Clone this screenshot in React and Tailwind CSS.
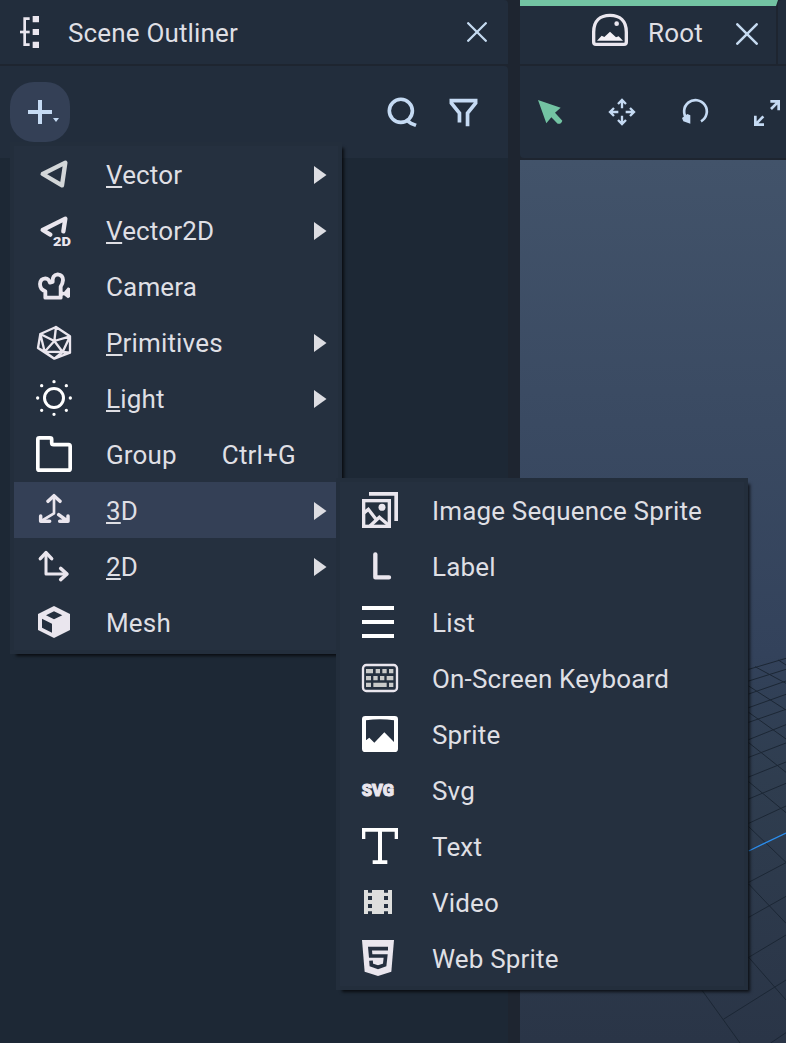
import React from "react";

function Icon({ children, color = "text-[#eae6ee]" }) {
  return (
    <svg viewBox="0 0 120 120" className={"h-10 w-10 shrink-0 " + color} fill="none" stroke="currentColor" strokeLinecap="round" strokeLinejoin="round">
      {children}
    </svg>
  );
}

const solid = { fill: "currentColor", stroke: "none" };

const icons = {
  vector: (
    <Icon color="text-[#d3d6d8]"><path strokeWidth="13" d="M26 60 94 26 84 94Z" /></Icon>
  ),
  vector2d: (
    <Icon>
      <path strokeWidth="13" d="M49 74 26 60 94 26 88 64" />
      <text {...solid} x="57" y="108" fontSize="39" fontWeight="900" textLength="54" lengthAdjust="spacingAndGlyphs" className="font-['Roboto',sans-serif]">2D</text>
    </Icon>
  ),
  camera: (
    <Icon>
      <path strokeWidth="11.5" d="M34 95V76Q18 70 18 54Q19 38 34 37Q45 38 48 50L56 48Q54 27 71 25Q87 27 87 42Q86 54 80 62V95Z" />
      <path {...solid} d="M82 76 90 78 102 64 108 67V93L102 97 90 88 82 90Z" />
    </Icon>
  ),
  primitives: (
    <Icon>
      <path strokeWidth="7" d="M66 15 108 43 108 92 61 110 12 78 19 36Z M61 57 66 15 M61 57 108 43 M61 57 86 90 M61 57 32 89 M61 57 19 36 M108 43 86 90 32 89 19 36 M86 90 108 92 M86 90 61 110 32 89 12 78" />
    </Icon>
  ),
  light: (
    <Icon color="text-white">
      <circle cx="60" cy="60" r="28.5" strokeWidth="9" />
      <path strokeWidth="10" d="M60 11h.01M60 109h.01M11 60h.01M109 60h.01M23 23h.01M97 23h.01M23 97h.01M97 97h.01" />
    </Icon>
  ),
  group: (
    <Icon color="text-white">
      <path strokeWidth="11" d="M16 11.5H48Q53 11.5 53 16V26Q53 32 59 32H104Q108.500 32 108.500 37V104Q108.500 108.500 104 108.500H16Q11.500 108.500 11.500 104V16Q11.500 11.500 16 11.500Z" />
    </Icon>
  ),
  threeD: (
    <Icon>
      <path strokeWidth="8" d="M60 20V70L22 93" />
      <path strokeWidth="10.5" d="M42 34 60 17 78 34 M20 78V94H47 M74 74 100 93 M102 78V94H77" />
    </Icon>
  ),
  twoD: (
    <Icon>
      <path strokeWidth="9" d="M36 20V84H98" />
      <path strokeWidth="10.5" d="M19 38 36 20 53 38 M80 67 99 84 80 101" />
    </Icon>
  ),
  mesh: (
    <Icon>
      <path {...solid} fillRule="evenodd" d="M60 12 108 36V84L60 108 12 84V36Z M36 40 60 52 85 40 60 28Z M24 50V77L54 92V65Z" />
    </Icon>
  ),
  sequence: (
    <Icon>
      <g strokeLinecap="butt" strokeLinejoin="miter">
        <path strokeWidth="11" d="M27 11.5H108.500V93" />
        <rect x="11" y="32" width="77" height="77" strokeWidth="10" />
        <path strokeWidth="10" d="M10 70 25 58 52 93 M30 108 58 82 88 107" />
      </g>
      <circle {...solid} cx="66" cy="52" r="10.5" />
    </Icon>
  ),
  label: <Icon><path strokeWidth="13" d="M46 25V94H87" /></Icon>,
  list: <Icon color="text-white"><path {...solid} d="M6 12H102V24H6Z M6 54H102V66H6Z M6 96H102V108H6Z" /></Icon>,
  keyboard: (
    <Icon>
      <rect x="9" y="21" width="102" height="78" rx="10" strokeWidth="7" />
      <path fill="#c9cac9" stroke="none" d="M18 33h21v13h-21z M47 33h13v13h-13z M67 33h13v13h-13z M87 33h13v13h-13z M18 54h15v13h-15z M40 54h13v13h-13z M60 54h13v13h-13z M80 54h20v13h-20z M18 74h15v13h-15z M40 74h40v13h-40z M87 74h13v13h-13z" />
    </Icon>
  ),
  sprite: (
    <Icon color="text-white">
      <path {...solid} fillRule="evenodd" d="M16 6H104Q114 6 114 16V104Q114 114 104 114H16Q6 114 6 104V16Q6 6 16 6Z M18 19V79L28 71 43 86 73 55 102 84V19Q60 13 18 19Z" />
    </Icon>
  ),
  svg: (
    <Icon>
      <text x="5" y="77" fill="currentColor" strokeWidth="3" fontSize="48" fontWeight="900" textLength="97" lengthAdjust="spacingAndGlyphs" className="font-['Roboto',sans-serif]">SVG</text>
    </Icon>
  ),
  text: (
    <Icon color="text-white"><path {...solid} d="M6 6H114V39H104V17H66V103H82V114H38V103H54V17H16V39H6Z" /></Icon>
  ),
  video: (
    <Icon color="text-[#dededd]">
      <path {...solid} d="M12 24H24V32H36V24H72V32H84V24H96V96H84V88H72V96H36V88H24V96H12Z M24 42V54H36V42Z M24 66V78H36V66Z M72 42V54H84V42Z M72 66V78H84V66Z" fillRule="evenodd" />
    </Icon>
  ),
  web: (
    <Icon>
      <path {...solid} d="M6 6H102L94 101 54 114 14 101Z" />
      <path stroke="#252f3f" strokeWidth="11" strokeLinecap="butt" strokeLinejoin="miter" d="M84 32H30L32 54H77L74 81 54 88 34 81 33 68" />
    </Icon>
  ),
};

const mainItems = [
  { icon: "vector", label: "Vector", mnemonic: true, sub: true },
  { icon: "vector2d", label: "Vector2D", mnemonic: true, sub: true },
  { icon: "camera", label: "Camera" },
  { icon: "primitives", label: "Primitives", mnemonic: true, sub: true },
  { icon: "light", label: "Light", mnemonic: true, sub: true },
  { icon: "group", label: "Group", shortcut: "Ctrl+G" },
  { icon: "threeD", label: "3D", mnemonic: true, sub: true, active: true },
  { icon: "twoD", label: "2D", mnemonic: true, sub: true },
  { icon: "mesh", label: "Mesh" },
];

const subItems = [
  { icon: "sequence", label: "Image Sequence Sprite" },
  { icon: "label", label: "Label" },
  { icon: "list", label: "List" },
  { icon: "keyboard", label: "On-Screen Keyboard" },
  { icon: "sprite", label: "Sprite" },
  { icon: "svg", label: "Svg" },
  { icon: "text", label: "Text" },
  { icon: "video", label: "Video" },
  { icon: "web", label: "Web Sprite" },
];

function MenuRow({ item }) {
  return (
    <div className={"flex h-14 items-center pl-5 pr-[11px] " + (item.active ? "bg-[#344056]" : "")}>
      {icons[item.icon]}
      <span className="ml-8 whitespace-nowrap pt-0.5">
        {item.mnemonic ? (
          <><span className="underline decoration-2 underline-offset-2 [text-decoration-skip-ink:none]">{item.label[0]}</span>{item.label.slice(1)}</>
        ) : item.label}
      </span>
      {item.shortcut && <span className="ml-[45px] pt-0.5">{item.shortcut}</span>}
      {item.sub && (
        <svg viewBox="0 0 13 18" className="ml-auto mt-0.5 h-[18px] w-[13px] fill-[#dddde2]"><path d="M0 0 12.500 9 0 18Z" /></svg>
      )}
    </div>
  );
}

function Close({ className }) {
  return (
    <svg viewBox="0 0 20 20" className={className} fill="none" stroke="#c5daf0" strokeWidth="2.300" strokeLinecap="round"><path d="M1.200 1.200 18.800 18.800M18.800 1.200 1.200 18.800" /></svg>
  );
}

function Outliner() {
  return (
    <section className="flex w-[508px] flex-col">
      <header className="flex h-16 items-center rounded-tr bg-[#222d3c] pl-4 pr-[21px]">
        <svg viewBox="48 36 84 120" className="h-10 w-7" fill="none" stroke="#eae6ee">
          <path strokeWidth="8" d="M89 56H74V134H89" />
          <path strokeWidth="8" d="M60 96H89" />
          <path fill="#eae6ee" stroke="none" d="M98 48h19v19h-19z M98 87h19v18h-19z M98 125h19v19h-19z" />
        </svg>
        <span className="ml-6 pt-0.5">Scene Outliner</span>
        <Close className="ml-auto h-5 w-5" />
      </header>
      <div className="mt-0.5 flex h-[92px] items-center rounded-tr bg-[#222d3c] pl-2.5 pr-7">
        <button className="flex h-[60px] w-[60px] items-center justify-center rounded-3xl bg-[#344056]">
          <svg viewBox="0 0 60 60" className="h-[60px] w-[60px] fill-[#c5daf3]"><path d="M28 18H32V28H42V32H32V42H28V32H18V28H28Z M43 36H49L46 40Z" /></svg>
        </button>
        <svg viewBox="48 288 100 100" className="ml-auto h-[33px] w-[33px]" fill="none" stroke="#c5daf3">
          <circle cx="93" cy="333" r="35" strokeWidth="11" />
          <path strokeWidth="11" d="M109 360 124 371 139 377" />
        </svg>
        <svg viewBox="236 296 92 92" className="ml-[29px] mr-px h-[31px] w-[31px]" fill="none" stroke="#c5daf3" strokeWidth="11">
          <path d="M270 372V344L246 314V307H318V314L294 344V383" />
        </svg>
      </div>
      <div className="flex-1 bg-[#1d2835]" />
    </section>
  );
}

function Floor() {
  return (
    <svg viewBox="0 0 438 1209" className="h-[403px] w-[146px]" fill="none" stroke="#1c2735" strokeWidth="3">
      <path d="M326 88 438 55M326 123 438 88M326 162 438 123M326 203 438 163M326 247 438 208M326 299 438 254M326 352 438 309M326 411 438 366M326 477 438 430M326 550 438 498M326 727 438 668M326 832 438 769M326 952 438 885M250 1138 438 1020M392 1209 438 1178" />
      <path d="M415 60 438 75M345 80 438 130M326 138 438 210M326 217 438 297M326 308 438 397M326 425 438 518M326 560 438 667M326 732 438 850M326 952 438 1080M187 1052 300 1209" />
      <path stroke="#2b8eee" strokeWidth="4" d="M326 633 438 579" />
    </svg>
  );
}

function Viewport() {
  return (
    <section className="flex w-[266px] flex-col overflow-hidden">
      <header className="flex h-16 gap-0.5">
        <div className="relative flex w-64 shrink-0 items-center bg-[#222d3c] pl-[70px] pr-[18px] pt-1">
          <div className="absolute left-0 top-0 h-1.5 w-[258px] bg-[#73c3a3] [clip-path:polygon(0_0,100%_0,256px_100%,0_100%)]" />
          <svg viewBox="660 36 120 108" className="-mt-2 h-9 w-10" fill="none" stroke="#eae6ee">
            <path strokeWidth="10" d="M671 127V96C671 62 691 46 720 46S769 62 769 96V127Q769 133 762 133H678Q671 133 671 127Z" />
            <circle cx="740" cy="71" r="7" fill="#eae6ee" stroke="none" />
            <path fill="#f4f1f6" stroke="none" d="M681 122 695 107 703 111 720 95 738 112 746 109 759 122Z" />
          </svg>
          <span className="ml-[18px] -mt-0.5">Root</span>
          <Close className="ml-auto h-[22px] w-[22px]" />
        </div>
        <div className="flex-1 rounded-tl bg-[#222d3c]" />
      </header>
      <div className="mt-0.5 flex h-[92px] shrink-0 items-center rounded-bl bg-[#222d3c]">
        <svg viewBox="450 198 798 276" className="h-[92px] w-[266px]" fill="none" stroke="#c5daf3" strokeWidth="7">
          <path fill="#73c3a3" stroke="none" d="M504 300 572 323 555 338 577 362Q574 373 563 371L544 352 529 370Z" />
          <path d="M756 301V325M756 347V371M722 336H745M767 336H791M744 312 756 300 768 312M744 360 756 372 768 360M732 324 720 336 732 348M780 324 792 336 780 348" />
          <path strokeWidth="8" d="M952 358A34 34 0 1 1 993 364" />
          <path fill="#c5daf3" stroke="none" d="M936 354 952 342 961 346V371L940 364Z" />
          <path strokeWidth="8" d="M1201 304H1226V331M1226 304 1203 327M1156 347V374H1182M1156 374 1180 349" />
        </svg>
      </div>
      <div className="mt-0.5 flex flex-1 items-end justify-end bg-[linear-gradient(180deg,#42536a_0%,#33425b_56%,#314056_61%,#2f3d4f_70%,#2a3547_100%)]">
        <Floor />
      </div>
    </section>
  );
}

const menuClass = "absolute border-4 border-[#232e3c] bg-[#25303f] shadow-[4px_4px_3px_-2px_rgba(0,0,0,0.7)] ";

export default function App() {
  return (
    <main className="relative flex h-[1043px] w-[786px] gap-3 overflow-hidden bg-[#1e2530] font-['Roboto',sans-serif] text-[26px] leading-8 tracking-[0.16px] text-[#dfdfe4]">
      <Outliner />
      <Viewport />
      <nav className={menuClass + "left-2.5 top-[142px] w-[332px]"}>
        {mainItems.map((item) => <MenuRow key={item.label} item={item} />)}
      </nav>
      <nav className={menuClass + "left-[336px] top-[478px] w-[412px]"}>
        {subItems.map((item) => <MenuRow key={item.label} item={item} />)}
      </nav>
    </main>
  );
}
